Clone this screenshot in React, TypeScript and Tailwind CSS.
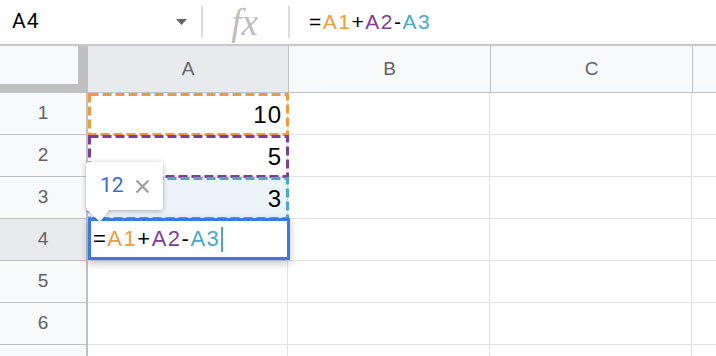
import React from "react";

const ORANGE = "#ee9c3b";
const PURPLE = "#7b3f98";
const TEAL = "#4aa8c9";

function Dashed({ color }: { color: string }) {
  return (
    <svg className="absolute left-0 top-0 pointer-events-none" width="202" height="43" style={{ zIndex: 2 }}>
      <rect x="1.5" y="1.5" width="198" height="40" fill="none" stroke={color} strokeWidth="3" strokeDasharray="9 4" />
    </svg>
  );
}

function Formula() {
  return (
    <>
      <span className="text-black">=</span>
      <span style={{ color: ORANGE }}>A1</span>
      <span className="text-black">+</span>
      <span style={{ color: PURPLE }}>A2</span>
      <span className="text-black">-</span>
      <span style={{ color: TEAL }}>A3</span>
    </>
  );
}

export default function App() {
  const rows = [1, 2, 3, 4, 5, 6, 7];
  const values: Record<number, string> = { 1: "10", 2: "5", 3: "3" };
  return (
    <div className="relative w-[716px] h-[356px] overflow-hidden bg-white" style={{ fontFamily: '"Liberation Sans", Arial, sans-serif' }}>
      {/* toolbar */}
      <div className="flex h-[46px] items-center border-b-2 border-[#c7c7c7] bg-white">
        <div className="flex w-[201px] items-center justify-between pl-[12px] pr-[14px]">
          <span className="text-[21px] tracking-[1px] text-black" style={{ fontFamily: 'Roboto, "Liberation Sans", sans-serif' }}>A4</span>
          <svg width="11" height="6" viewBox="0 0 11 6">
            <polygon points="0,0 11,0 5.5,6" fill="#666" />
          </svg>
        </div>
        <div className="h-[32px] w-[2px] bg-[#dadce0]" />
        <div className="flex w-[85px] items-center justify-center pr-[2px]">
          <span className="text-[37px] italic leading-none text-[#bdbdbd]" style={{ fontFamily: '"Liberation Serif", serif' }}>fx</span>
        </div>
        <div className="h-[32px] w-[2px] bg-[#dadce0]" />
        <div className="pl-[19px] text-[21px] tracking-[1.5px]">
          <Formula />
        </div>
      </div>

      {/* column headers */}
      <div className="flex h-[47px]">
        <div className="w-[88px] h-full bg-[#c0c0c0]">
          <div className="w-[78px] h-[38px] bg-[#f8f9fa]" />
        </div>
        <div className="flex w-[201px] items-center justify-center border-r border-b border-[#c0c0c0] bg-[#e8eaed] text-[19px] text-[#5f6368]">A</div>
        <div className="flex w-[202px] items-center justify-center border-r border-b border-[#c0c0c0] bg-[#f8f9fa] text-[19px] text-[#5f6368]">B</div>
        <div className="flex w-[202px] items-center justify-center border-r border-b border-[#c0c0c0] bg-[#f8f9fa] text-[19px] text-[#5f6368]">C</div>
        <div className="flex-1 border-b border-[#c0c0c0] bg-[#f8f9fa]" />
      </div>

      {/* rows */}
      {rows.map((r) => (
        <div key={r} className="flex h-[42px]">
          <div
            className={`flex w-[88px] items-center justify-center border-r-2 border-b border-[#c0c0c0] text-[19px] text-[#5f6368] ${
              r === 4 ? "bg-[#e8eaed]" : "bg-[#f8f9fa]"
            }`}
          >
            {r < 7 ? r : ""}
          </div>
          <div
            className={`relative flex w-[200px] items-end justify-end border-r border-b border-[#e2e2e2] pr-[5px] pb-[7px] text-[24px] leading-none tracking-[1px] text-black ${
              r === 3 ? "bg-[#ebf5f9]" : "bg-white"
            }`}
          >
            {values[r] ?? ""}
            {r === 1 && <Dashed color={ORANGE} />}
            {r === 2 && <Dashed color={PURPLE} />}
            {r === 3 && <Dashed color={TEAL} />}
            {r === 4 && (
              <div className="absolute left-0 top-[-1px] z-10 flex h-[42px] w-[202px] items-center border-[3px] border-[#3b78e2] bg-white pl-[2px] text-[22px] tracking-[1.5px] shadow-[0_3px_8px_rgba(0,0,0,0.25)]">
                <Formula />
                <span className="ml-[1px] inline-block h-[25px] w-[2px]" style={{ backgroundColor: TEAL }} />
              </div>
            )}
          </div>
          <div className="w-[202px] border-r border-b border-[#e2e2e2]" />
          <div className="w-[202px] border-r border-b border-[#e2e2e2]" />
          <div className="flex-1 border-b border-[#e2e2e2]" />
        </div>
      ))}

      {/* tooltip */}
      <div className="absolute left-[86px] top-[162px] z-20">
        <div className="flex h-[48px] w-[77px] items-center rounded-[3px] bg-white pl-[14px] shadow-[0_1px_5px_rgba(0,0,0,0.3)]">
          <span className="text-[21px] text-[#3b6bd6]" style={{ fontFamily: 'Roboto, "Liberation Sans", sans-serif' }}>12</span>
          <svg className="ml-[11px]" width="15" height="15" viewBox="0 0 15 15">
            <path d="M1.5 1.5 L13.5 13.5 M13.5 1.5 L1.5 13.5" stroke="#9e9e9e" strokeWidth="2.2" />
          </svg>
        </div>
        <svg className="absolute left-0 top-[47px]" width="26" height="14" viewBox="0 0 26 14" style={{ filter: "drop-shadow(0 1px 1px rgba(0,0,0,0.2))" }}>
          <polygon points="0,0 24,0 14,13" fill="white" />
        </svg>
      </div>
    </div>
  );
}
